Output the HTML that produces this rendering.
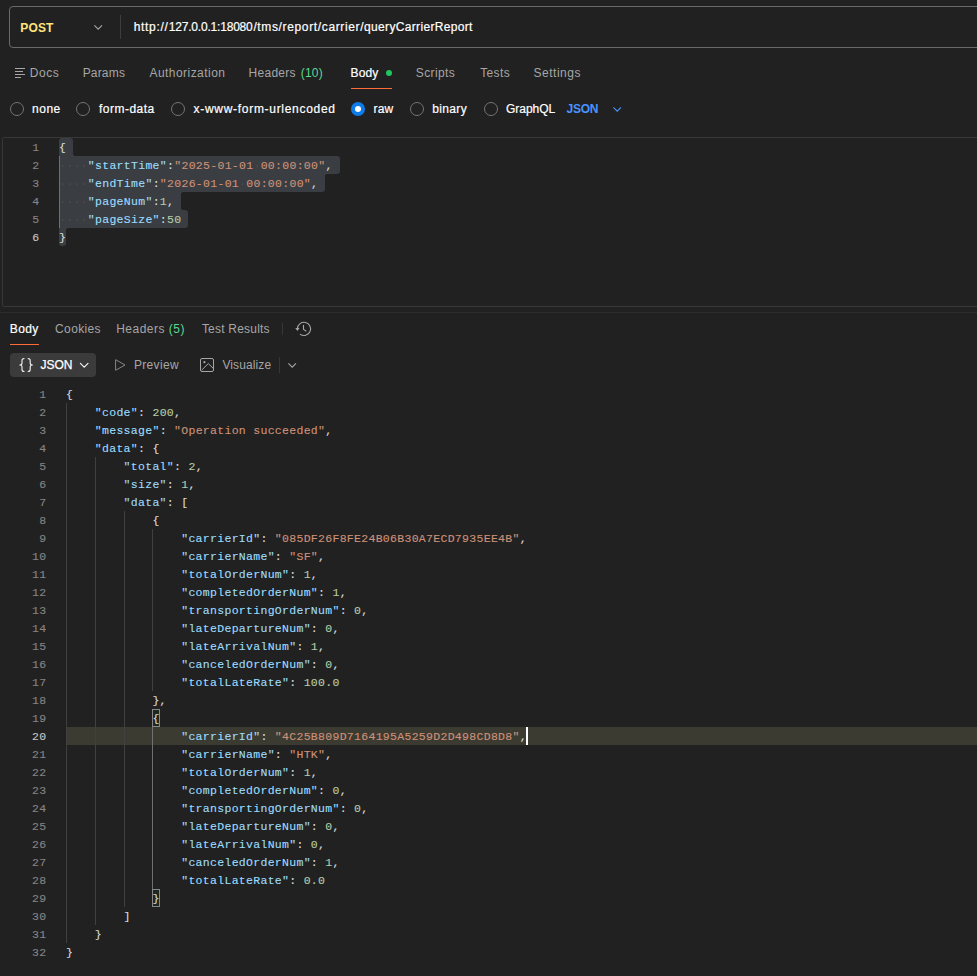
<!DOCTYPE html>
<html lang="en">
<head>
<meta charset="utf-8">
<title>queryCarrierReport</title>
<style>
*{box-sizing:border-box;margin:0;padding:0}
html,body{width:977px;height:976px;overflow:hidden;background:#212121}
body{position:relative;font-family:"Liberation Sans",sans-serif;font-size:12px;color:#fff;-webkit-font-smoothing:antialiased}
.a{position:absolute;white-space:nowrap;line-height:16px;height:16px;-webkit-text-stroke:0.2px currentColor}
.sec{color:#a6a6a6;-webkit-text-stroke:0}
.grn{color:#5cd98f}
.urlbox{position:absolute;left:9px;top:6px;width:1000px;height:42px;border:1px solid #6a6a6a;border-radius:4px}
.vdiv{position:absolute;width:1px;background:#3d3d3d}
.radio{position:absolute;width:14px;height:14px;border:1px solid #747474;border-radius:50%}
.radio.on{border:none;background:#0d7ce9}
.radio.on::after{content:"";position:absolute;left:4px;top:4px;width:6px;height:6px;border-radius:50%;background:#fff}
.ul{position:absolute;height:1px;background:#ff6c37}
.hl{position:absolute;height:1px;background:#2d2d2d}
.reqbox{position:absolute;left:2px;top:137px;width:1000px;height:170px;border:1px solid #383838;border-radius:2px}
.code{font-family:"Liberation Mono",monospace;font-size:11.5px;letter-spacing:0.3px;-webkit-text-stroke:0.12px currentColor}
.row{position:absolute;left:0;height:18px;line-height:18px;white-space:pre;width:977px}
.ln{position:absolute;top:1px;text-align:right;color:#858585}
.ln.act{color:#c6c6c6}
.req .ln{left:0;width:39.4px}
.req .tx{position:absolute;left:59px;top:1px}
.resp .ln{left:0;width:46.4px}
.resp .tx{position:absolute;left:66px;top:1px}
.k{color:#9cdcfe}.s{color:#ce9178}.n{color:#b5cea8}.p{color:#dcdcdc}
.w{color:#4d4e47}
.sel{position:absolute;background:#3a3d41;height:18px}
.cc{position:absolute;width:3px;height:3px}
.guide{position:absolute;width:1px;background:#404040}
.curline{position:absolute;left:66px;top:727px;width:911px;height:18px;background:#3c3b32}
.bm{position:absolute;width:8px;height:18px;border:1px solid #888;background:#1e281e}
.btn{position:absolute;left:10px;top:353px;width:86px;height:24px;background:#3b3b3b;border-radius:4px}
svg{position:absolute;overflow:visible}
</style>
</head>
<body>
<div class="urlbox"></div>
<div class="a" id="post" style="left:20.3px;letter-spacing:0.14px;top:20px;font-weight:bold;color:#ffe47e;-webkit-text-stroke:0">POST</div>
<svg style="left:93.8px;top:24.8px" width="9" height="5" viewBox="0 0 9 5"><path d="M0.4 0.4 L4.2 4.2 L8 0.4" fill="none" stroke="#a6a6a6" stroke-width="1.1"/></svg>
<div class="vdiv" style="left:120px;top:15px;height:24px"></div>
<div class="a" id="u1" style="left:133.7px;letter-spacing:0.67px;top:19px">http://</div>
<div class="a" id="u2" style="left:168.7px;letter-spacing:-0.19px;top:19px">127.0.0.1:18080</div>
<div class="a" id="u3" style="left:253.4px;letter-spacing:0.64px;top:19px">/tms/report/carrier/</div>
<div class="a" id="u4" style="left:364.1px;letter-spacing:0.33px;top:19px">queryCarrierReport</div>

<svg style="left:15px;top:68px" width="11" height="10" viewBox="0 0 11 10"><path d="M0 0.5H10M0 3.5H8M0 6.5H10M0 9.5H6" fill="none" stroke="#a6a6a6" stroke-width="1"/></svg>
<div class="a sec" id="t1" style="left:29.8px;letter-spacing:0.53px;top:65px">Docs</div>
<div class="a sec" id="t2" style="left:82.7px;letter-spacing:0.17px;top:65px">Params</div>
<div class="a sec" id="t3" style="left:149.5px;letter-spacing:0.45px;top:65px">Authorization</div>
<div class="a sec" id="t4" style="left:248.6px;letter-spacing:0.27px;word-spacing:1.2px;top:65px">Headers <span class="grn">(10)</span></div>
<div class="a" id="t5" style="left:350.5px;letter-spacing:0.17px;top:65px">Body</div>
<div style="position:absolute;left:386px;top:70px;width:6px;height:6px;border-radius:50%;background:#1fc55e"></div>
<div class="ul" style="left:351px;top:88px;width:41px"></div>
<div class="a sec" id="t6" style="left:415.8px;letter-spacing:0.39px;top:65px">Scripts</div>
<div class="a sec" id="t7" style="left:480.2px;letter-spacing:0.36px;top:65px">Tests</div>
<div class="a sec" id="t8" style="left:533.5px;letter-spacing:0.51px;top:65px">Settings</div>

<div class="radio" style="left:10px;top:102px"></div>
<div class="a" id="r1" style="left:32px;letter-spacing:0.53px;top:101px">none</div>
<div class="radio" style="left:76px;top:102px"></div>
<div class="a" id="r2" style="left:99px;letter-spacing:0.49px;top:101px">form-data</div>
<div class="radio" style="left:171px;top:102px"></div>
<div class="a" id="r3" style="left:193.6px;letter-spacing:0.7px;top:101px">x-www-form-urlencoded</div>
<div class="radio on" style="left:351px;top:102px"></div>
<div class="a" id="r4" style="left:373.4px;letter-spacing:0.26px;top:101px">raw</div>
<div class="radio" style="left:410px;top:102px"></div>
<div class="a" id="r5" style="left:432.2px;letter-spacing:0.36px;top:101px">binary</div>
<div class="radio" style="left:484px;top:102px"></div>
<div class="a" id="r6" style="left:506px;letter-spacing:-0.03px;top:101px">GraphQL</div>
<div class="a" id="r7" style="left:566.4px;letter-spacing:-0.18px;top:101px;color:#4a94ff;font-weight:bold;-webkit-text-stroke:0">JSON</div>
<svg style="left:612.8px;top:106.8px" width="9" height="5" viewBox="0 0 9 5"><path d="M0.4 0.4 L4.2 4.2 L8 0.4" fill="none" stroke="#4a94ff" stroke-width="1.1"/></svg>
<div class="reqbox"></div>
<div class="sel" style="left:59px;top:138px;width:14px;border-radius:3px 3px 0 0"></div>
<div class="sel" style="left:59px;top:156px;width:281px;border-radius:0 3px 3px 0"></div>
<div class="sel" style="left:59px;top:174px;width:266px;border-radius:0 0 3px 0"></div>
<div class="sel" style="left:59px;top:192px;width:122px"></div>
<div class="sel" style="left:59px;top:210px;width:129px;border-radius:0 3px 3px 0"></div>
<div class="sel" style="left:59px;top:228px;width:7px;border-radius:0 0 3px 3px"></div>
<div class="cc" style="left:73px;top:153px;background:radial-gradient(circle at 100% 0,transparent 3px,#3a3d41 3.5px)"></div>
<div class="cc" style="left:325px;top:174px;background:radial-gradient(circle at 100% 100%,transparent 3px,#3a3d41 3.5px)"></div>
<div class="cc" style="left:181px;top:192px;background:radial-gradient(circle at 100% 100%,transparent 3px,#3a3d41 3.5px)"></div>
<div class="cc" style="left:181px;top:207px;background:radial-gradient(circle at 100% 0,transparent 3px,#3a3d41 3.5px)"></div>
<div class="cc" style="left:66px;top:228px;background:radial-gradient(circle at 100% 100%,transparent 3px,#3a3d41 3.5px)"></div>
<div class="guide" style="left:59px;top:156px;height:72px;background:#707070"></div>
<div class="code req">
<div class="row" style="top:138px"><span class="ln">1</span><span class="tx"><span class="p">{</span></span></div>
<div class="row" style="top:156px"><span class="ln">2</span><span class="tx"><span class="w">····</span><span class="k">"startTime"</span><span class="p">:</span><span class="s">"2025-01-01</span><span class="w">·</span><span class="s">00:00:00"</span><span class="p">,</span></span></div>
<div class="row" style="top:174px"><span class="ln">3</span><span class="tx"><span class="w">····</span><span class="k">"endTime"</span><span class="p">:</span><span class="s">"2026-01-01</span><span class="w">·</span><span class="s">00:00:00"</span><span class="p">,</span></span></div>
<div class="row" style="top:192px"><span class="ln">4</span><span class="tx"><span class="w">····</span><span class="k">"pageNum"</span><span class="p">:</span><span class="n">1</span><span class="p">,</span></span></div>
<div class="row" style="top:210px"><span class="ln">5</span><span class="tx"><span class="w">····</span><span class="k">"pageSize"</span><span class="p">:</span><span class="n">50</span></span></div>
<div class="row" style="top:228px"><span class="ln act">6</span><span class="tx"><span class="p">}</span></span></div>
</div>
<div class="hl" style="left:0;top:312px;width:977px"></div>
<div class="a" id="m1" style="left:9.8px;letter-spacing:0.37px;top:321px">Body</div>
<div class="ul" style="left:10px;top:344px;width:29px"></div>
<div class="a sec" id="m2" style="left:55.1px;letter-spacing:0.36px;top:321px">Cookies</div>
<div class="a sec" id="m3" style="left:116.2px;letter-spacing:0.49px;top:321px">Headers <span class="grn">(5)</span></div>
<div class="a sec" id="m4" style="left:201.9px;letter-spacing:0.21px;top:321px">Test Results</div>
<div class="vdiv" style="left:282px;top:323px;height:12px;background:#363636"></div>
<svg style="left:294px;top:321px" width="18" height="16" viewBox="294 321 18 16"><path d="M297.4 328.6 A6.6 6.6 0 1 1 300.3 334.4" fill="none" stroke="#a6a6a6" stroke-width="1.1" stroke-linecap="round"/><path d="M295.3 328 L299.5 328 L297.4 331 Z" fill="#a6a6a6"/><path d="M303.5 325.2 V329.4 L305.9 331" fill="none" stroke="#a6a6a6" stroke-width="1.1" stroke-linecap="round" stroke-linejoin="round"/></svg>
<div class="btn"></div>
<svg style="left:19px;top:358px" width="15" height="14" viewBox="0 0 15 14"><path d="M5 0.6 C3.6 0.6 3 1.3 3 2.6 V5 C3 6.2 2.4 7 0.8 7 C2.4 7 3 7.8 3 9 V11.4 C3 12.7 3.6 13.4 5 13.4 M9.2 0.6 C10.6 0.6 11.2 1.3 11.2 2.6 V5 C11.2 6.2 11.8 7 13.4 7 C11.8 7 11.2 7.8 11.2 9 V11.4 C11.2 12.7 10.6 13.4 9.2 13.4" fill="none" stroke="#ededed" stroke-width="1.15" stroke-linecap="round" stroke-linejoin="round"/></svg>
<div class="a" id="b2" style="left:40.5px;letter-spacing:-0.06px;top:357px;-webkit-text-stroke:0.25px #fff">JSON</div>
<svg style="left:80px;top:362.8px" width="9" height="5" viewBox="0 0 9 5"><path d="M0.4 0.4 L4.2 4.2 L8 0.4" fill="none" stroke="#f2f2f2" stroke-width="1.15" stroke-linecap="round"/></svg>
<svg style="left:115px;top:359px" width="11" height="12" viewBox="0 0 11 12"><path d="M0.6 0.7 L10 6 L0.6 11.3 Z" fill="none" stroke="#858585" stroke-width="1" stroke-linejoin="round"/></svg>
<div class="a sec" id="b3" style="left:133.9px;letter-spacing:0.35px;top:357px">Preview</div>
<svg style="left:200px;top:358px" width="14" height="14" viewBox="0 0 14 14"><rect x="0.5" y="0.5" width="13" height="13" rx="1.5" fill="none" stroke="#a6a6a6" stroke-width="1"/><circle cx="4.4" cy="4.2" r="1.1" fill="#a6a6a6"/><path d="M1.6 12.2 L8.3 5.6 L13.3 10.4" fill="none" stroke="#a6a6a6" stroke-width="1"/></svg>
<div class="a sec" id="b4" style="left:222.4px;letter-spacing:0.11px;top:357px">Visualize</div>
<div class="vdiv" style="left:279px;top:357px;height:16px;background:#363636"></div>
<svg style="left:287.9px;top:362.8px" width="9" height="5" viewBox="0 0 9 5"><path d="M0.4 0.4 L4.2 4.2 L8 0.4" fill="none" stroke="#a6a6a6" stroke-width="1.1"/></svg>
<div class="curline"></div>
<div class="guide" style="left:66px;top:403px;height:540px"></div>
<div class="guide" style="left:95px;top:457px;height:468px"></div>
<div class="guide" style="left:124px;top:511px;height:396px"></div>
<div class="guide" style="left:152px;top:529px;height:162px"></div>
<div class="guide" style="left:152px;top:727px;height:162px;background:#707070"></div>
<div class="bm" style="left:152px;top:709px"></div>
<div class="bm" style="left:152px;top:889px"></div>
<div style="position:absolute;left:526px;top:727px;width:2px;height:18px;background:#fff"></div>
<div class="code resp">
<div class="row" style="top:385px"><span class="ln">1</span><span class="tx"><span class="p">{</span></span></div>
<div class="row" style="top:403px"><span class="ln">2</span><span class="tx">    <span class="k">"code"</span><span class="p">: </span><span class="n">200</span><span class="p">,</span></span></div>
<div class="row" style="top:421px"><span class="ln">3</span><span class="tx">    <span class="k">"message"</span><span class="p">: </span><span class="s">"Operation succeeded"</span><span class="p">,</span></span></div>
<div class="row" style="top:439px"><span class="ln">4</span><span class="tx">    <span class="k">"data"</span><span class="p">: {</span></span></div>
<div class="row" style="top:457px"><span class="ln">5</span><span class="tx">        <span class="k">"total"</span><span class="p">: </span><span class="n">2</span><span class="p">,</span></span></div>
<div class="row" style="top:475px"><span class="ln">6</span><span class="tx">        <span class="k">"size"</span><span class="p">: </span><span class="n">1</span><span class="p">,</span></span></div>
<div class="row" style="top:493px"><span class="ln">7</span><span class="tx">        <span class="k">"data"</span><span class="p">: [</span></span></div>
<div class="row" style="top:511px"><span class="ln">8</span><span class="tx">            <span class="p">{</span></span></div>
<div class="row" style="top:529px"><span class="ln">9</span><span class="tx">                <span class="k">"carrierId"</span><span class="p">: </span><span class="s">"085DF26F8FE24B06B30A7ECD7935EE4B"</span><span class="p">,</span></span></div>
<div class="row" style="top:547px"><span class="ln">10</span><span class="tx">                <span class="k">"carrierName"</span><span class="p">: </span><span class="s">"SF"</span><span class="p">,</span></span></div>
<div class="row" style="top:565px"><span class="ln">11</span><span class="tx">                <span class="k">"totalOrderNum"</span><span class="p">: </span><span class="n">1</span><span class="p">,</span></span></div>
<div class="row" style="top:583px"><span class="ln">12</span><span class="tx">                <span class="k">"completedOrderNum"</span><span class="p">: </span><span class="n">1</span><span class="p">,</span></span></div>
<div class="row" style="top:601px"><span class="ln">13</span><span class="tx">                <span class="k">"transportingOrderNum"</span><span class="p">: </span><span class="n">0</span><span class="p">,</span></span></div>
<div class="row" style="top:619px"><span class="ln">14</span><span class="tx">                <span class="k">"lateDepartureNum"</span><span class="p">: </span><span class="n">0</span><span class="p">,</span></span></div>
<div class="row" style="top:637px"><span class="ln">15</span><span class="tx">                <span class="k">"lateArrivalNum"</span><span class="p">: </span><span class="n">1</span><span class="p">,</span></span></div>
<div class="row" style="top:655px"><span class="ln">16</span><span class="tx">                <span class="k">"canceledOrderNum"</span><span class="p">: </span><span class="n">0</span><span class="p">,</span></span></div>
<div class="row" style="top:673px"><span class="ln">17</span><span class="tx">                <span class="k">"totalLateRate"</span><span class="p">: </span><span class="n">100.0</span></span></div>
<div class="row" style="top:691px"><span class="ln">18</span><span class="tx">            <span class="p">},</span></span></div>
<div class="row" style="top:709px"><span class="ln">19</span><span class="tx">            <span class="p">{</span></span></div>
<div class="row" style="top:727px"><span class="ln act">20</span><span class="tx">                <span class="k">"carrierId"</span><span class="p">: </span><span class="s">"4C25B809D7164195A5259D2D498CD8D8"</span><span class="p">,</span></span></div>
<div class="row" style="top:745px"><span class="ln">21</span><span class="tx">                <span class="k">"carrierName"</span><span class="p">: </span><span class="s">"HTK"</span><span class="p">,</span></span></div>
<div class="row" style="top:763px"><span class="ln">22</span><span class="tx">                <span class="k">"totalOrderNum"</span><span class="p">: </span><span class="n">1</span><span class="p">,</span></span></div>
<div class="row" style="top:781px"><span class="ln">23</span><span class="tx">                <span class="k">"completedOrderNum"</span><span class="p">: </span><span class="n">0</span><span class="p">,</span></span></div>
<div class="row" style="top:799px"><span class="ln">24</span><span class="tx">                <span class="k">"transportingOrderNum"</span><span class="p">: </span><span class="n">0</span><span class="p">,</span></span></div>
<div class="row" style="top:817px"><span class="ln">25</span><span class="tx">                <span class="k">"lateDepartureNum"</span><span class="p">: </span><span class="n">0</span><span class="p">,</span></span></div>
<div class="row" style="top:835px"><span class="ln">26</span><span class="tx">                <span class="k">"lateArrivalNum"</span><span class="p">: </span><span class="n">0</span><span class="p">,</span></span></div>
<div class="row" style="top:853px"><span class="ln">27</span><span class="tx">                <span class="k">"canceledOrderNum"</span><span class="p">: </span><span class="n">1</span><span class="p">,</span></span></div>
<div class="row" style="top:871px"><span class="ln">28</span><span class="tx">                <span class="k">"totalLateRate"</span><span class="p">: </span><span class="n">0.0</span></span></div>
<div class="row" style="top:889px"><span class="ln">29</span><span class="tx">            <span class="p">}</span></span></div>
<div class="row" style="top:907px"><span class="ln">30</span><span class="tx">        <span class="p">]</span></span></div>
<div class="row" style="top:925px"><span class="ln">31</span><span class="tx">    <span class="p">}</span></span></div>
<div class="row" style="top:943px"><span class="ln">32</span><span class="tx"><span class="p">}</span></span></div>
</div>
</body>
</html>
